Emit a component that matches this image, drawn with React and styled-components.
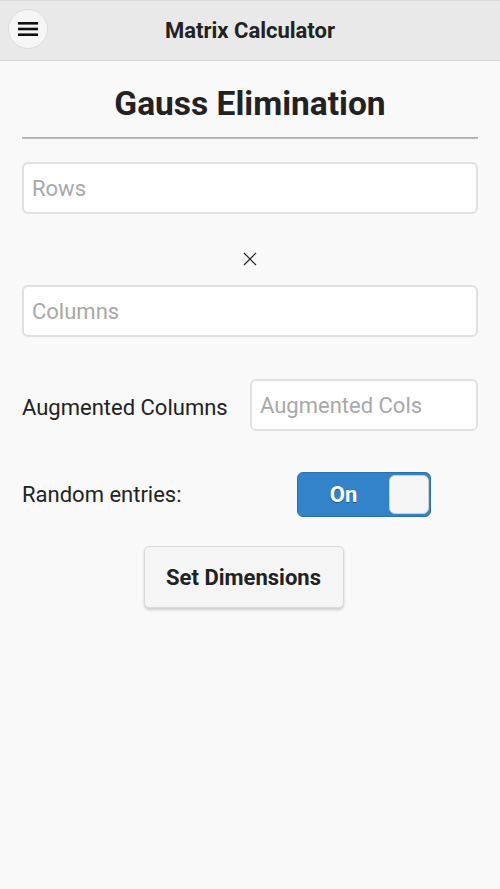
import React from 'react';
import styled, { createGlobalStyle } from 'styled-components';

const GlobalStyle = createGlobalStyle`
  html, body {
    margin: 0;
    padding: 0;
    background: #f9f9f9;
    font-family: Roboto, "Noto Sans", sans-serif;
  }
`;

const Page = styled.div`
  min-height: 889px;
  background: #f9f9f9;
`;

const Header = styled.header`
  height: 59px;
  border-top: 1px solid #dcdcdc;
  border-bottom: 1px solid #d6d6d6;
  background: #e9e9e9;
  display: flex;
  align-items: center;
  justify-content: center;
  position: relative;
`;

const MenuButton = styled.button`
  position: absolute;
  left: 8px;
  top: 8px;
  width: 40px;
  height: 40px;
  border-radius: 50%;
  border: 1px solid #dcdcdc;
  background: #f6f6f6;
  display: flex;
  align-items: center;
  justify-content: center;
  padding: 0;
`;

const HeaderTitle = styled.h1`
  margin: 0;
  font-size: 22px;
  font-weight: 700;
  color: #222;
`;

const Content = styled.main`
  padding: 0 22px;
  display: flex;
  flex-direction: column;
`;

const PageTitle = styled.h2`
  margin: 23px 0 0;
  font-size: 33.5px;
  line-height: 40px;
  font-weight: 700;
  color: #222;
  text-align: center;
`;

const Rule = styled.hr`
  margin: 13px 0 23px;
  border: 0;
  height: 2px;
  background: linear-gradient(#a3a3a3, #c8c8c8);
`;

const Field = styled.input`
  box-sizing: border-box;
  width: 100%;
  height: 52px;
  border: 2px solid #e0e0e0;
  border-radius: 6px;
  background: #fff;
  padding: 0 8px;
  font-family: inherit;
  font-size: 22px;
  color: #222;
  outline: none;
  &::placeholder {
    color: #a8a8a8;
  }
`;

const Times = styled.div`
  height: 71px;
  box-sizing: border-box;
  padding-top: 18px;
  display: flex;
  align-items: center;
  justify-content: center;
`;

const Row = styled.div`
  display: flex;
  align-items: center;
  justify-content: space-between;
  margin-top: ${p => p.$top}px;
`;

const Label = styled.span`
  font-size: 22px;
  color: #222;
  padding-top: ${p => p.$shift || 0}px;
`;

const SmallField = styled(Field)`
  width: 228px;
`;

const Toggle = styled.div`
  box-sizing: border-box;
  width: 134px;
  height: 45px;
  margin-right: 47px;
  border: 1px solid #2a6fb0;
  border-radius: 6px;
  background: #3283c9;
  display: flex;
  align-items: center;
  padding: 0 1px 0 0;
`;

const ToggleText = styled.span`
  flex: 1;
  text-align: center;
  color: #fff;
  font-size: 22px;
  font-weight: 700;
  text-shadow: 0 1px 1px rgba(0, 0, 0, 0.35);
`;

const Knob = styled.span`
  width: 40px;
  height: 39px;
  border-radius: 6px;
  background: #f5f5f5;
  border: 1px solid #cfcfcf;
  box-sizing: border-box;
`;

const ButtonRow = styled.div`
  display: flex;
  justify-content: center;
  margin-top: 29px;
  padding-right: 13px;
`;

const Button = styled.button`
  width: 200px;
  height: 62px;
  border: 1px solid #dadada;
  border-radius: 5px;
  background: #f5f5f5;
  box-shadow: 0 2px 3px rgba(0, 0, 0, 0.18);
  font-family: inherit;
  font-size: 22px;
  font-weight: 700;
  color: #222;
`;

export default function App() {
  return (
    <Page>
      <GlobalStyle />
      <Header>
        <MenuButton aria-label="menu">
          <svg width="20" height="16" viewBox="0 0 20 16">
            <rect x="0" y="1" width="20" height="2.6" fill="#111" />
            <rect x="0" y="6.7" width="20" height="2.6" fill="#111" />
            <rect x="0" y="12.4" width="20" height="2.6" fill="#111" />
          </svg>
        </MenuButton>
        <HeaderTitle>Matrix Calculator</HeaderTitle>
      </Header>
      <Content>
        <PageTitle>Gauss Elimination</PageTitle>
        <Rule />
        <Field placeholder="Rows" />
        <Times>
          <svg width="14" height="14" viewBox="0 0 14 14">
            <path d="M1 1L13 13M13 1L1 13" stroke="#222" strokeWidth="1.2" />
          </svg>
        </Times>
        <Field placeholder="Columns" />
        <Row $top={42}>
          <Label $shift={4}>Augmented Columns</Label>
          <SmallField placeholder="Augmented Cols" />
        </Row>
        <Row $top={41}>
          <Label>Random entries:</Label>
          <Toggle>
            <ToggleText>On</ToggleText>
            <Knob />
          </Toggle>
        </Row>
        <ButtonRow>
          <Button>Set Dimensions</Button>
        </ButtonRow>
      </Content>
    </Page>
  );
}
